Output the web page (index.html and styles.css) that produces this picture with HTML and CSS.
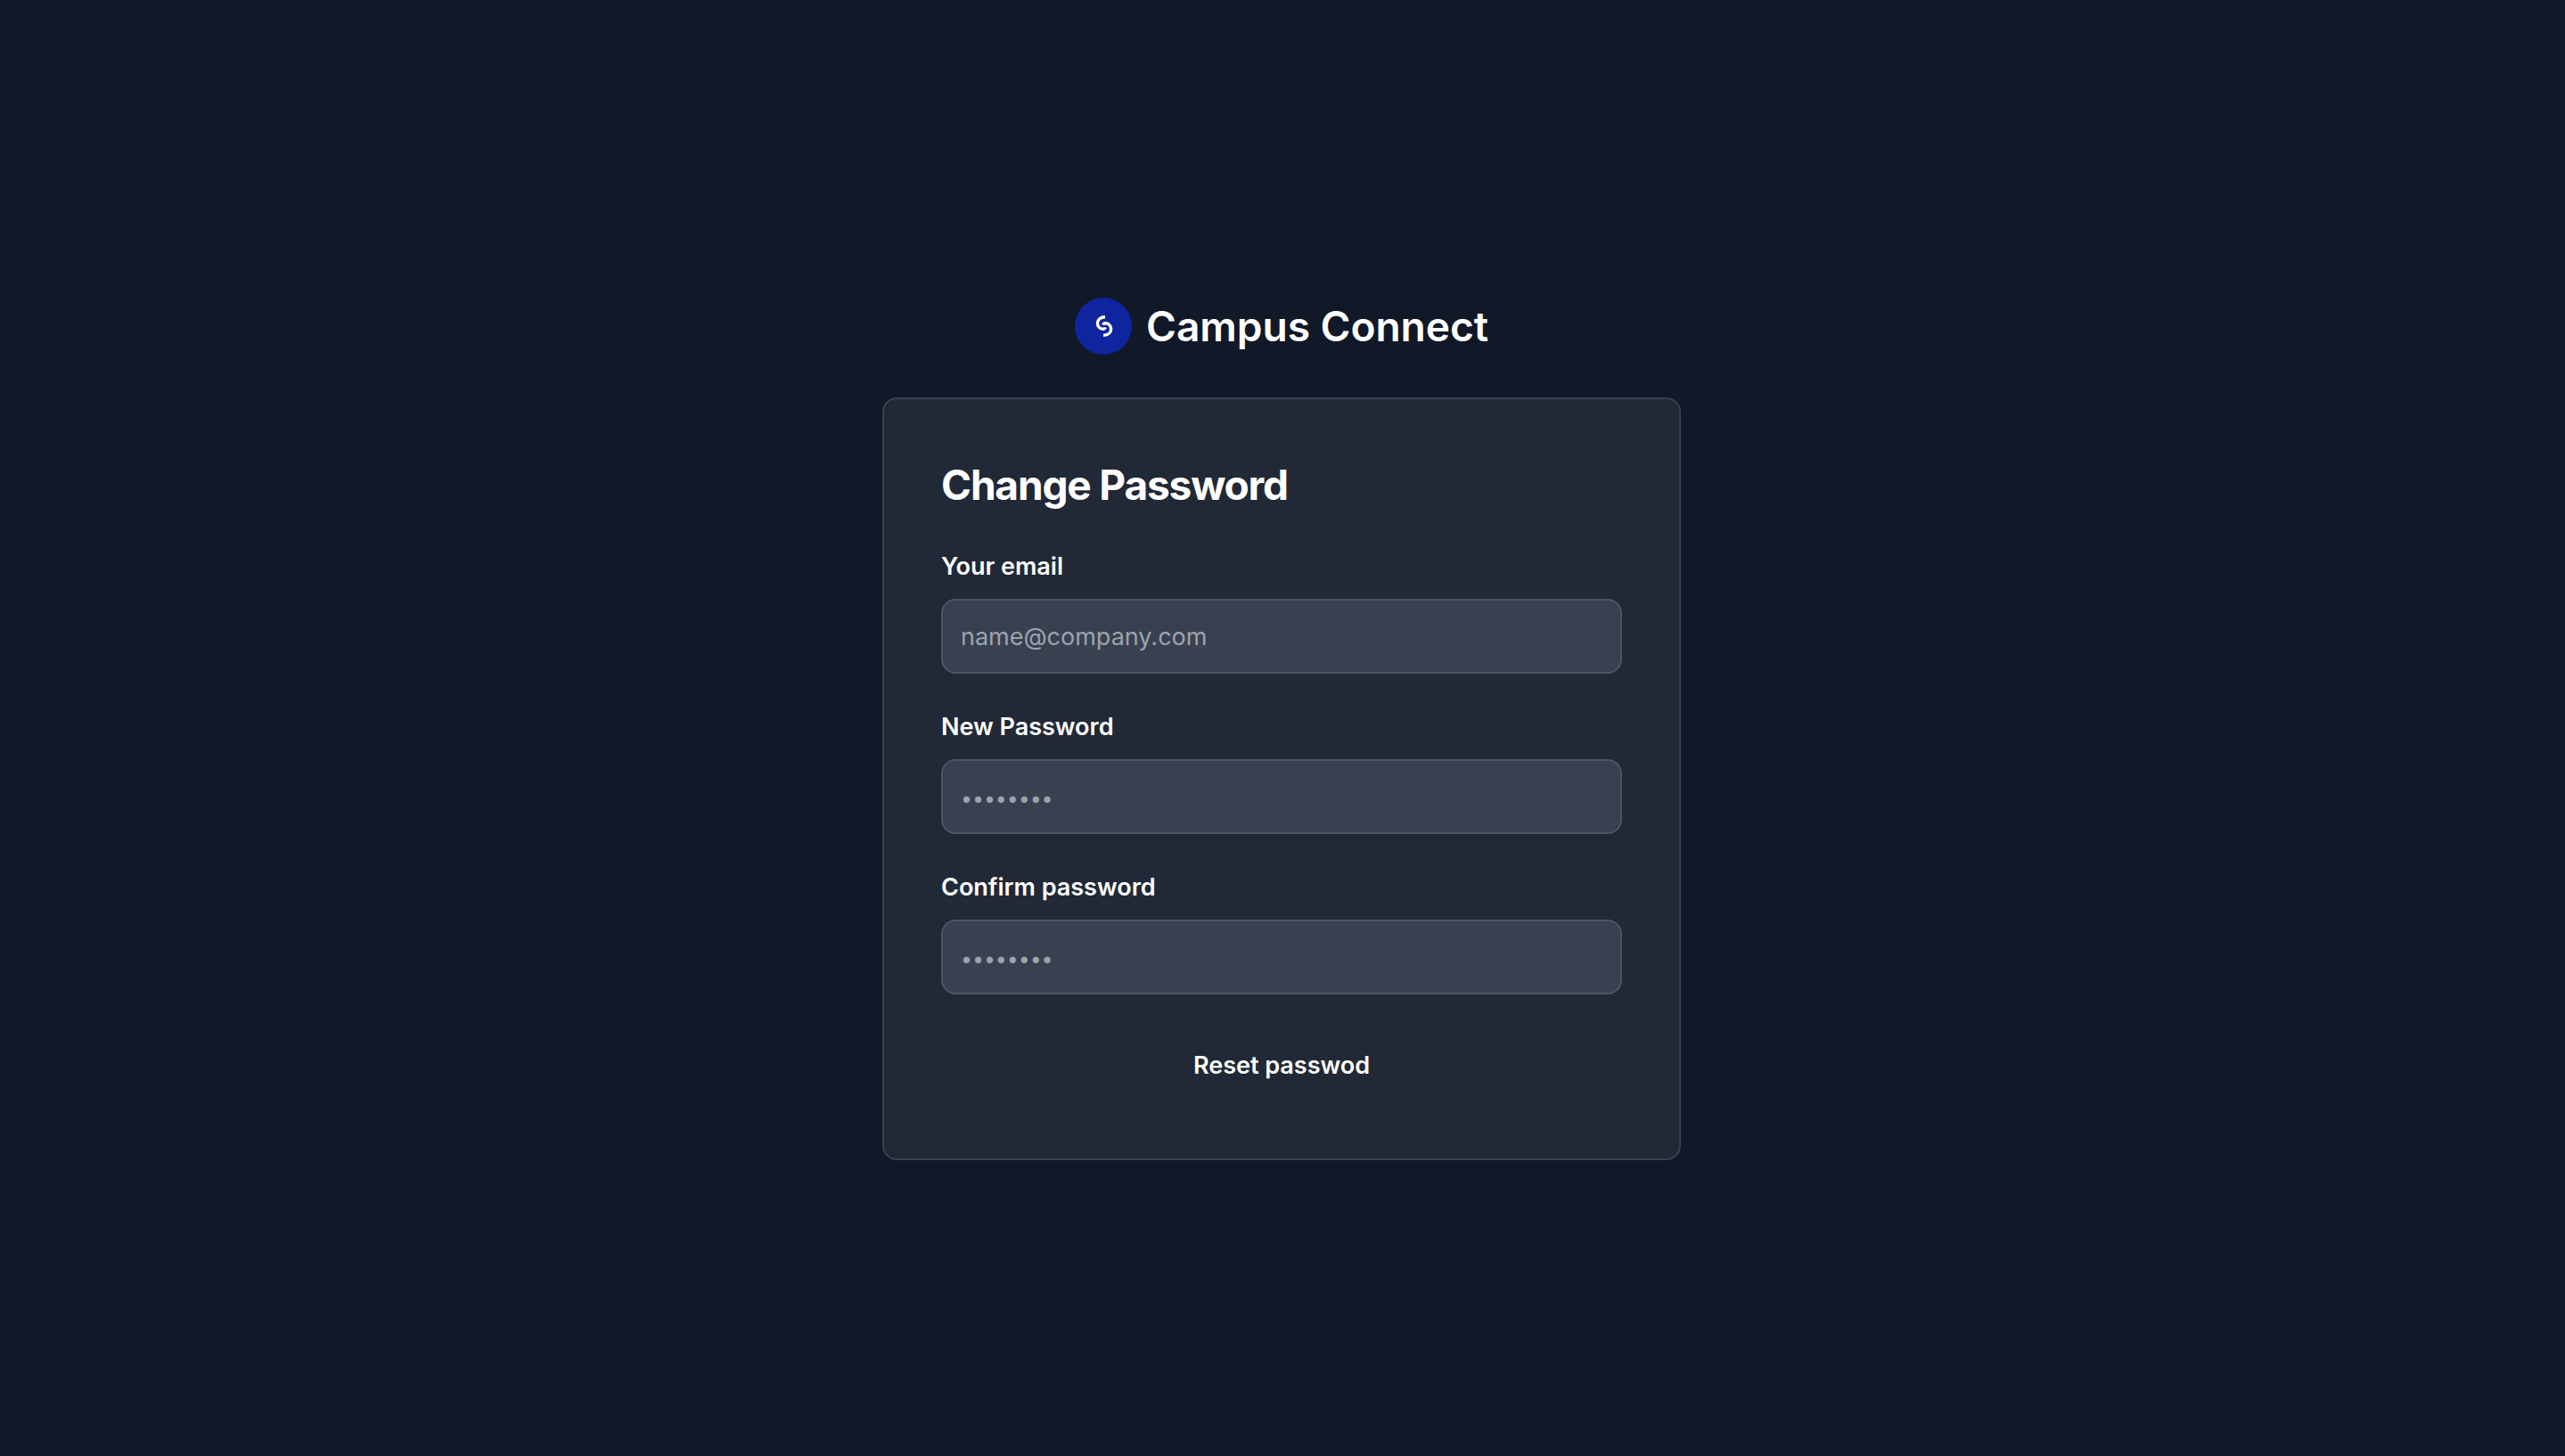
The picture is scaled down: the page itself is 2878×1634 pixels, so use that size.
FILE: index.html
```html
<!DOCTYPE html>
<html lang="en">
<head>
  <meta charset="utf-8">
  <meta name="viewport" content="width=device-width, initial-scale=1">
  <title>Campus Connect</title>
  <link rel="stylesheet" href="styles.css">
</head>
<body>
  <main class="page">
    <a class="brand" href="#">
      <svg class="brand-logo" viewBox="0 0 64 64" aria-hidden="true">
        <circle cx="32" cy="32" r="32" fill="#0f259f"/>
        <g fill="none" stroke="#fff" stroke-width="3.400">
          <path d="M34 21.700 C28.700 21.700 25.400 24.800 25.400 28.700 C25.400 32.500 28.300 35.200 31.600 35.200 C33 35.200 34 34.500 34.300 33.400"/>
          <path d="M32 42.300 C37.300 42.300 40.600 39.200 40.600 35.300 C40.600 31.500 37.700 28.800 34.400 28.800 C33 28.800 32 29.500 31.700 30.600"/>
        </g>
      </svg>
      <span>Campus Connect</span>
    </a>
    <section class="card">
      <h1 class="card-title">Change Password</h1>
      <form class="form">
        <div class="field">
          <label for="email">Your email</label>
          <input type="email" id="email" placeholder="name@company.com">
        </div>
        <div class="field">
          <label for="password">New Password</label>
          <input type="password" id="password" placeholder="••••••••">
        </div>
        <div class="field">
          <label for="confirm">Confirm password</label>
          <input type="password" id="confirm" placeholder="••••••••">
        </div>
        <button class="submit" type="submit">Reset passwod</button>
      </form>
    </section>
  </main>
</body>
</html>
```

FILE: styles.css
```css
*, *::before, *::after {
  box-sizing: border-box;
}

body {
  margin: 0;
  background: #111827;
  color: #fff;
  font-family: Inter, "Liberation Sans", sans-serif;
  font-size: 27px;
  line-height: 40px;
}

.page {
  min-height: 100vh;
  padding: 2px 2px 0 0;
  display: flex;
  flex-direction: column;
  align-items: center;
  justify-content: center;
  gap: 48px;
}

.brand {
  display: flex;
  align-items: center;
  gap: 16px;
  color: #fff;
  font-size: 46px;
  font-weight: 600;
  line-height: 64px;
  text-decoration: none;
}

.brand-logo {
  width: 64px;
  height: 64px;
}

.card {
  width: 100%;
  max-width: 896px;
  padding: 64px;
  display: flex;
  flex-direction: column;
  gap: 40px;
  background: #212936;
  border: 2px solid #394150;
  border-radius: 16px;
}

.card-title {
  margin: 0;
  font-size: 46px;
  font-weight: 700;
  line-height: 64px;
  letter-spacing: -0.025em;
}

.form {
  display: flex;
  flex-direction: column;
  gap: 40px;
}

.field {
  display: flex;
  flex-direction: column;
  gap: 16px;
}

.field label {
  font-weight: 600;
}

.field input {
  width: 100%;
  height: 84px;
  padding: 20px;
  background: #394150;
  border: 2px solid #4b5563;
  border-radius: 16px;
  color: #fff;
  font: inherit;
}

.field input::placeholder {
  color: #9ca3af;
  opacity: 1;
}

.field input[type="password"]::placeholder {
  font-size: 23px;
}

.submit {
  padding: 20px 40px;
  background: transparent;
  border: 0;
  border-radius: 16px;
  color: #fff;
  font: inherit;
  font-weight: 600;
  cursor: pointer;
}
```
